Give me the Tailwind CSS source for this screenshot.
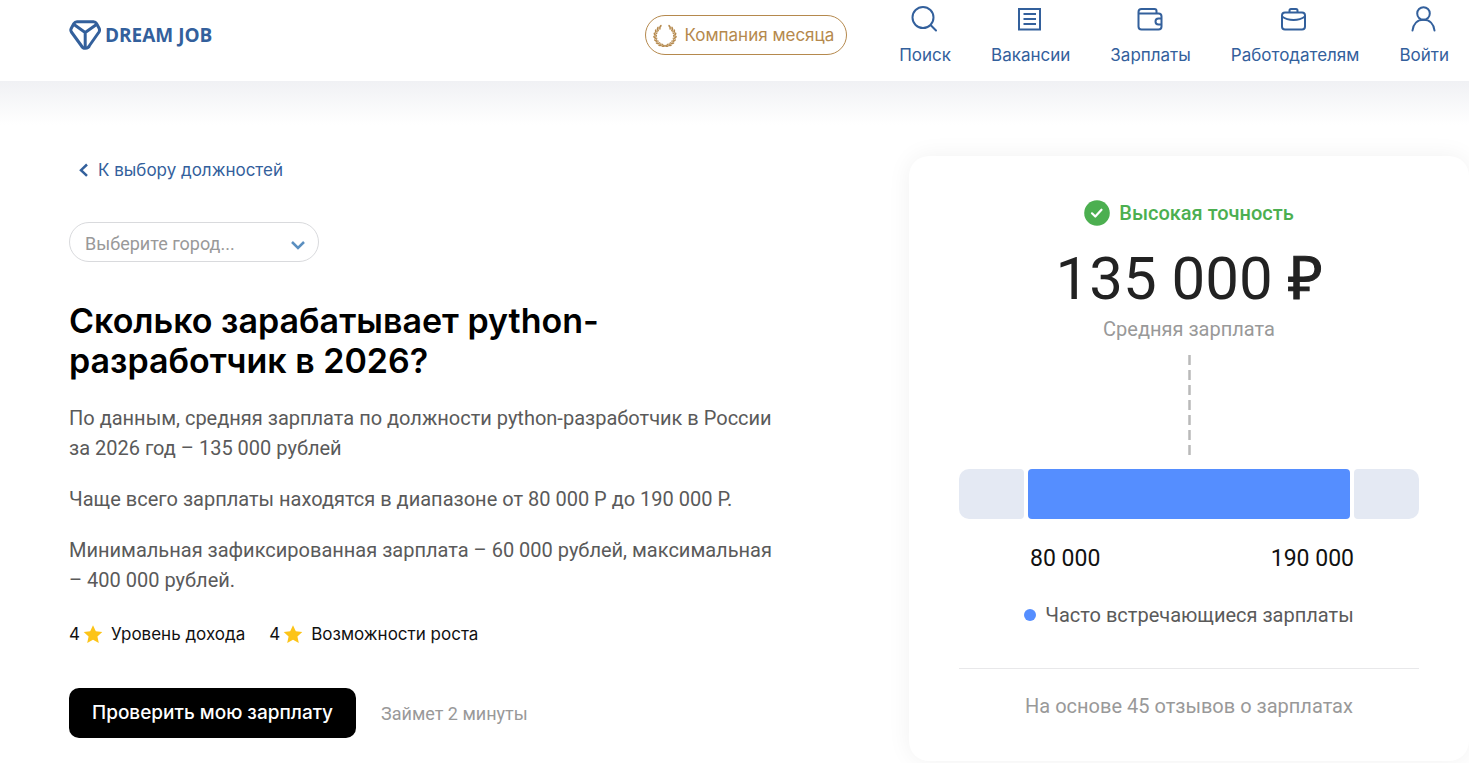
<!DOCTYPE html>
<html lang="ru">
<head>
<meta charset="utf-8">
<meta name="viewport" content="width=device-width, initial-scale=1">
<title>Dream Job — зарплата python-разработчика</title>
<script src="https://cdn.jsdelivr.net/npm/@tailwindcss/browser@4"></script>
</head>
<body class="bg-white text-black font-['Roboto',sans-serif] min-h-screen overflow-x-hidden">
<header class="flex items-start justify-between bg-white pl-[69px] pr-5 h-[81px] text-[#33609c] font-['Inter',sans-serif]">
  <a href="#" class="flex items-center gap-1 mt-5 h-[30px]" aria-label="Dream Job">
    <svg class="w-8 h-[30px]" viewBox="0 0 32 30" fill="none" stroke="currentColor" stroke-width="3" stroke-linejoin="round" stroke-linecap="round" aria-hidden="true">
      <path d="M8 1.700 H24.500 Q26.500 1.700 27.500 3.500 L30.200 8.500 Q31 10.200 30 12 L20.500 25.500 Q19.500 28.300 16.300 28.300 Q13.500 28.300 12.200 25.500 L2.400 12 Q1.300 10.200 2.200 8.500 L4.900 3.500 Q6 1.700 8 1.700Z"/>
      <path d="M5 4.500 L16.200 12.500 L27.500 4.500 M16.200 12.500 V27"/>
    </svg>
    <span class="font-['Open_Sans',sans-serif] font-bold text-[19px] leading-none">DREAM JOB</span>
  </a>
  <nav class="flex items-start gap-10">
    <a href="#" class="mt-[15px] mr-3 flex items-center gap-2 h-10 rounded-full border border-[#b5894d] pl-[7px] pr-3 pt-px text-[17px] text-[#b5894d] whitespace-nowrap">
      <svg class="w-6 h-6" viewBox="0 0 24 24" aria-hidden="true">
        <defs>
          <g id="leaves" fill="currentColor">
            <ellipse cx="12" cy="1.500" rx=".9" ry="1.900" transform="rotate(-26 12 12) rotate(60 12 1.500)"/>
            <ellipse cx="12" cy="1.500" rx=".9" ry="1.900" transform="rotate(-44 12 12) rotate(60 12 1.500)"/>
            <ellipse cx="12" cy="1.500" rx=".9" ry="1.900" transform="rotate(-62 12 12) rotate(60 12 1.500)"/>
            <ellipse cx="12" cy="1.500" rx=".9" ry="1.900" transform="rotate(-80 12 12) rotate(60 12 1.500)"/>
            <ellipse cx="12" cy="1.500" rx=".9" ry="1.900" transform="rotate(-98 12 12) rotate(60 12 1.500)"/>
            <ellipse cx="12" cy="1.500" rx=".9" ry="1.900" transform="rotate(-116 12 12) rotate(60 12 1.500)"/>
            <ellipse cx="12" cy="1.500" rx=".9" ry="1.900" transform="rotate(-134 12 12) rotate(60 12 1.500)"/>
            <ellipse cx="12" cy="1.500" rx=".9" ry="1.900" transform="rotate(-152 12 12) rotate(65 12 1.500)"/>
            <ellipse cx="12" cy="1.800" rx=".9" ry="1.900" transform="rotate(-170 12 12) rotate(75 12 1.800)"/>
            <ellipse cx="12" cy="3.300" rx=".6" ry="1.200" transform="rotate(-36 12 12) rotate(115 12 3.300)"/>
            <ellipse cx="12" cy="3.300" rx=".6" ry="1.200" transform="rotate(-54 12 12) rotate(115 12 3.300)"/>
            <ellipse cx="12" cy="3.300" rx=".6" ry="1.200" transform="rotate(-72 12 12) rotate(115 12 3.300)"/>
            <ellipse cx="12" cy="3.300" rx=".6" ry="1.200" transform="rotate(-90 12 12) rotate(115 12 3.300)"/>
            <ellipse cx="12" cy="3.300" rx=".6" ry="1.200" transform="rotate(-108 12 12) rotate(115 12 3.300)"/>
            <ellipse cx="12" cy="3.300" rx=".6" ry="1.200" transform="rotate(-126 12 12) rotate(115 12 3.300)"/>
            <ellipse cx="12" cy="3.300" rx=".6" ry="1.200" transform="rotate(-144 12 12) rotate(115 12 3.300)"/>
            <ellipse cx="12" cy="3.300" rx=".6" ry="1.200" transform="rotate(-162 12 12) rotate(105 12 3.300)"/>
            <path d="M7 4 A9.400 9.400 0 0 0 12 21.400" fill="none" stroke="currentColor" stroke-width=".5"/>
          </g>
        </defs>
        <use href="#leaves"/>
        <use href="#leaves" transform="translate(24 0) scale(-1 1)"/>
      </svg>
      Компания месяца
    </a>
    <a href="#" class="flex flex-col items-center gap-1.5 pt-1 text-[17px] leading-[30px]">
      <svg class="w-[30px] h-[30px]" viewBox="0 0 30 30" fill="none" stroke="currentColor" stroke-width="2" stroke-linecap="round" aria-hidden="true"><circle cx="13" cy="13.500" r="10.500"/><path d="M20.800 21.200 L26 26.500"/></svg>
      Поиск</a>
    <a href="#" class="flex flex-col items-center gap-1.5 pt-1 text-[17px] leading-[30px]">
      <svg class="w-[30px] h-[30px]" viewBox="0 0 30 30" fill="none" stroke="currentColor" stroke-width="2" aria-hidden="true"><path d="M3 5h21v20.500h-21z M7.500 10h12.500 M7.500 15h12.500 M7.500 20h12.500"/></svg>
      Вакансии</a>
    <a href="#" class="flex flex-col items-center gap-1.5 pt-1 text-[17px] leading-[30px]">
      <svg class="w-[30px] h-[30px]" viewBox="0 0 30 30" fill="none" stroke="currentColor" stroke-width="2" stroke-linejoin="round" aria-hidden="true"><path d="M20.500 9.500V7a2 2 0 0 0-2-2H5.500a3 3 0 0 0-3 3v14.500a3 3 0 0 0 3 3h17a3 3 0 0 0 3-3V12.500a3 3 0 0 0-3-3H3.500 M25.500 14.500h-3a3 3 0 0 0 0 6h3"/></svg>
      Зарплаты</a>
    <a href="#" class="flex flex-col items-center gap-1.5 pt-1 text-[17px] leading-[30px]">
      <svg class="w-[30px] h-[30px]" viewBox="0 0 30 30" fill="none" stroke="currentColor" stroke-width="2" stroke-linejoin="round" aria-hidden="true"><rect x="2" y="8.500" width="23" height="17" rx="3"/><path d="M9.500 8.500V6.500a1.500 1.500 0 0 1 1.500-1.500h5a1.500 1.500 0 0 1 1.500 1.500v2 M2 12.500c4 3 8 3.500 11.500 3.500s7.500-.5 11.500-3.500"/></svg>
      Работодателям</a>
    <a href="#" class="flex flex-col items-center gap-1.5 pt-1 text-[17px] leading-[30px]">
      <svg class="w-[30px] h-[30px]" viewBox="0 0 30 30" fill="none" stroke="currentColor" stroke-width="2" stroke-linecap="round" aria-hidden="true"><circle cx="14.500" cy="9.500" r="6.300"/><path d="M3.500 26.500c.8-6.500 4.800-10.700 11-10.700s10.200 4.200 11 10.700"/></svg>
      Войти</a>
  </nav>
</header>

<main class="flex items-start justify-between pl-[69px] pt-[75px] bg-linear-to-b from-[#f0f1f4] to-white to-[44px]">
  <section class="w-[720px]">
    <a href="#" class="flex items-center gap-2 pl-[9px] h-[30px] text-[17px] font-['Inter',sans-serif] text-[#33609c]">
      <svg class="w-3 h-4" viewBox="0 0 12 16" fill="none" stroke="currentColor" stroke-width="2.500" aria-hidden="true"><path d="M9 1.500 3 7.200l6 5.700"/></svg>
      К выбору должностей
    </a>
    <div class="relative mt-9 w-[250px]">
      <select aria-label="Город" class="appearance-none w-full h-10 rounded-full border border-[#d9dadd] bg-white pl-[15px] pr-10 pt-[2px] text-[18px] text-[#999]">
        <option>Выберите город...</option>
      </select>
      <svg class="absolute right-[13px] top-[15px] w-4 h-4 pointer-events-none" viewBox="0 0 16 16" fill="none" stroke="#5b8fc0" stroke-width="2.500" aria-hidden="true"><path d="M2 5l6 6 6-6"/></svg>
    </div>
    <h1 class="mt-[39px] w-[560px] text-[34px] leading-10 font-semibold font-['Inter',sans-serif]">Сколько зарабатывает python-разработчик в 2026?</h1>
    <div class="mt-[22px] flex flex-col gap-[21px] text-[20px] leading-[30px] text-[#5a5a5a]">
      <p>По данным, средняя зарплата по должности python-разработчик в России за 2026 год – 135 000 рублей</p>
      <p>Чаще всего зарплаты находятся в диапазоне от 80 000 Р до 190 000 Р.</p>
      <p>Минимальная зафиксированная зарплата – 60 000 рублей, максимальная – 400 000 рублей.</p>
    </div>
    <ul class="mt-6 flex gap-6 text-[17px] leading-[30px] font-['Inter',sans-serif] text-[#111]">
      <li class="flex items-center">4
        <svg class="ml-[3px] mr-2 w-5 h-5" viewBox="0 0 20 20" fill="#fcc419" aria-hidden="true"><path d="M10 1.300l2.800 6 6.500.7-4.900 4.400 1.400 6.600-5.800-3.300-5.800 3.300 1.400-6.600L.7 8l6.500-.7z"/></svg>
        Уровень дохода</li>
      <li class="flex items-center">4
        <svg class="ml-[3px] mr-2 w-5 h-5" viewBox="0 0 20 20" fill="#fcc419" aria-hidden="true"><path d="M10 1.300l2.800 6 6.500.7-4.900 4.400 1.400 6.600-5.800-3.300-5.800 3.300 1.400-6.600L.7 8l6.500-.7z"/></svg>
        Возможности роста</li>
    </ul>
    <div class="mt-[39px] flex items-center gap-[25px]">
      <button type="button" class="h-[50px] rounded-[10px] bg-black px-[23px] text-[19px] font-medium text-white font-['Inter',sans-serif]">Проверить мою зарплату</button>
      <span class="text-[18px] text-[#999]">Займет 2 минуты</span>
    </div>
  </section>

  <aside class="w-[560px] shrink-0 rounded-[20px] bg-white px-[50px] pt-[42px] pb-10 text-center shadow-[0_0_24px_rgba(0,0,0,0.06)]">
    <div class="flex items-center justify-center gap-[9px] h-[30px] text-[20px] font-medium text-[#4caf50]">
      <svg class="w-[26px] h-[26px]" viewBox="0 0 26 26" aria-hidden="true"><circle cx="13" cy="13" r="12.800" fill="#4caf50"/><path d="M8 13.300l3.300 3.200 6.200-6.800" fill="none" stroke="#fff" stroke-width="2.200" stroke-linecap="round" stroke-linejoin="round"/></svg>
      Высокая точность
    </div>
    <p class="mt-4 text-[60px] leading-[70px] text-[#222]">135 000 <span class="font-['Liberation_Sans',sans-serif] [-webkit-text-stroke:1px_#222]">₽</span></p>
    <p class="text-[20px] leading-[30px] text-[#999]">Средняя зарплата</p>
    <svg class="mx-auto mt-[11px] w-[3px] h-[100px]" viewBox="0 0 3 100" aria-hidden="true"><path d="M1.500 0V100" stroke="#b9b9b9" stroke-width="2.500" stroke-dasharray="10 5"/></svg>
    <div class="mt-[14px] flex gap-1 h-[50px]">
      <div class="flex-[14] rounded-l-[10px] rounded-r-[4px] bg-[#e4e9f3]"></div>
      <div class="flex-[70] rounded-[4px] bg-[#558eff]"></div>
      <div class="flex-[14] rounded-l-[4px] rounded-r-[10px] bg-[#e4e9f3]"></div>
    </div>
    <div class="mt-[25px] flex justify-between pl-[71px] pr-[65px] text-[23px] leading-[30px] text-[#111]"><span>80 000</span><span>190 000</span></div>
    <div class="mt-[26px] flex items-center justify-center gap-[9px] text-[20px] leading-[30px] text-[#5a5a5a]"><span class="size-3 rounded-full bg-[#558eff]"></span>Часто встречающиеся зарплаты</div>
    <p class="mt-[38px] border-t border-[#e8e8ea] pt-[22px] text-[20px] leading-[30px] text-[#999]">На основе 45 отзывов о зарплатах</p>
  </aside>
</main>
</body>
</html>
